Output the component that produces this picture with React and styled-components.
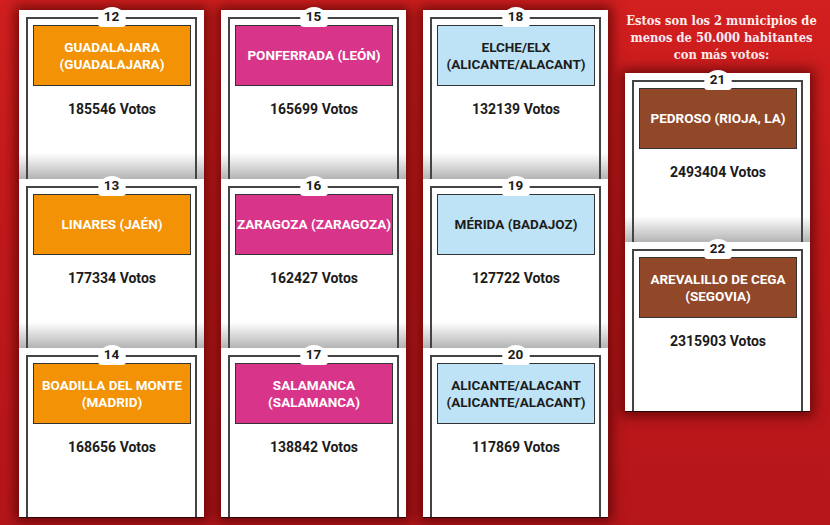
import React from "react";
import styled, { createGlobalStyle } from "styled-components";

const GlobalStyle = createGlobalStyle`
  html, body {
    margin: 0;
    padding: 0;
  }
  body {
    background: linear-gradient(180deg, #d21f1f 0%, #c2191b 45%, #b5161a 100%);
    font-family: Roboto, "Liberation Sans", Arial, sans-serif;
    overflow: hidden;
  }
`;

const Page = styled.div`
  display: flex;
  align-items: flex-start;
  gap: 17px;
  height: 525px;
  padding: 10px 0 0 19px;
  box-sizing: border-box;
  overflow: hidden;
`;

const Column = styled.div`
  width: 185px;
  display: flex;
  flex-direction: column;
  background: #fff;
  border-bottom: 1px solid #2b0505;
  box-shadow: 0 0 12px 4px rgba(70, 0, 0, 0.7);
`;

const Side = styled.div`
  width: 185px;
  display: flex;
  flex-direction: column;
  align-items: center;
`;

const Heading = styled.div`
  width: 210px;
  margin: 2px 0 0 8px;
  color: #fcecee;
  font-family: "DejaVu Serif Condensed", "DejaVu Serif", serif;
  font-stretch: condensed;
  font-weight: bold;
  font-size: 12.8px;
  line-height: 17px;
  text-align: center;
  white-space: nowrap;
`;

const SideColumn = styled(Column)`
  margin-top: 10px;
  align-self: stretch;
`;

const Cell = styled.div`
  height: 169px;
  padding: 7px 7px 0;
  box-sizing: border-box;
  background: ${({ $last }) =>
    $last
      ? "#fff"
      : "linear-gradient(180deg, #fff 0, #fff calc(100% - 26px), #b4b4b4 100%)"};
`;

const Card = styled.div`
  position: relative;
  height: 100%;
  box-sizing: border-box;
  border: 2px solid #444;
  border-bottom: none;
  padding: 6px 4px 0 5px;
`;

const Badge = styled.div`
  position: absolute;
  top: -12px;
  left: 50%;
  transform: translateX(-50%);
  width: 28px;
  height: 20px;
  border-radius: 14px 14px 4px 4px;
  background: #fff;
  color: #1b1b1b;
  font-weight: bold;
  font-size: 13.5px;
  line-height: 19px;
  text-align: center;
`;

const tones = {
  orange: { bg: "#f39205", fg: "#fff" },
  pink: { bg: "#d8358a", fg: "#fff" },
  blue: { bg: "#bfe3f6", fg: "#1c1c1c" },
  brown: { bg: "#914829", fg: "#fff" },
};

const NameBox = styled.div`
  height: 61px;
  box-sizing: border-box;
  border: 1px solid #333;
  background: ${({ $tone }) => tones[$tone].bg};
  color: ${({ $tone }) => tones[$tone].fg};
  display: flex;
  flex-direction: column;
  align-items: center;
  justify-content: center;
  font-weight: bold;
  font-size: 13.5px;
  line-height: 17px;
  white-space: nowrap;
`;

const Votes = styled.div`
  margin-top: 15px;
  color: #1b1b1b;
  font-weight: bold;
  font-size: 14px;
  line-height: 17px;
  text-align: center;
`;

const columns = [
  {
    tone: "orange",
    items: [
      { n: 12, name: ["GUADALAJARA", "(GUADALAJARA)"], votes: 185546 },
      { n: 13, name: ["LINARES (JAÉN)"], votes: 177334 },
      { n: 14, name: ["BOADILLA DEL MONTE", "(MADRID)"], votes: 168656 },
    ],
  },
  {
    tone: "pink",
    items: [
      { n: 15, name: ["PONFERRADA (LEÓN)"], votes: 165699 },
      { n: 16, name: ["ZARAGOZA (ZARAGOZA)"], votes: 162427 },
      { n: 17, name: ["SALAMANCA", "(SALAMANCA)"], votes: 138842 },
    ],
  },
  {
    tone: "blue",
    items: [
      { n: 18, name: ["ELCHE/ELX", "(ALICANTE/ALACANT)"], votes: 132139 },
      { n: 19, name: ["MÉRIDA (BADAJOZ)"], votes: 127722 },
      { n: 20, name: ["ALICANTE/ALACANT", "(ALICANTE/ALACANT)"], votes: 117869 },
    ],
  },
];

const small = {
  tone: "brown",
  items: [
    { n: 21, name: ["PEDROSO (RIOJA, LA)"], votes: 2493404 },
    { n: 22, name: ["AREVALILLO DE CEGA", "(SEGOVIA)"], votes: 2315903 },
  ],
};

const Entry = ({ item, tone, last }) => (
  <Cell $last={last}>
    <Card>
      <Badge>{item.n}</Badge>
      <NameBox $tone={tone}>
        {item.name.map((line) => (
          <span key={line}>{line}</span>
        ))}
      </NameBox>
      <Votes>{item.votes} Votos</Votes>
    </Card>
  </Cell>
);

export default function App() {
  return (
    <>
      <GlobalStyle />
      <Page>
        {columns.map((col) => (
          <Column key={col.tone}>
            {col.items.map((item, i) => (
              <Entry key={item.n} item={item} tone={col.tone} last={i === col.items.length - 1} />
            ))}
          </Column>
        ))}
        <Side>
          <Heading>
            Estos son los 2 municipios de
            <br />
            menos de 50.000 habitantes
            <br />
            con más votos:
          </Heading>
          <SideColumn>
            {small.items.map((item, i) => (
              <Entry key={item.n} item={item} tone={small.tone} last={i === small.items.length - 1} />
            ))}
          </SideColumn>
        </Side>
      </Page>
    </>
  );
}
